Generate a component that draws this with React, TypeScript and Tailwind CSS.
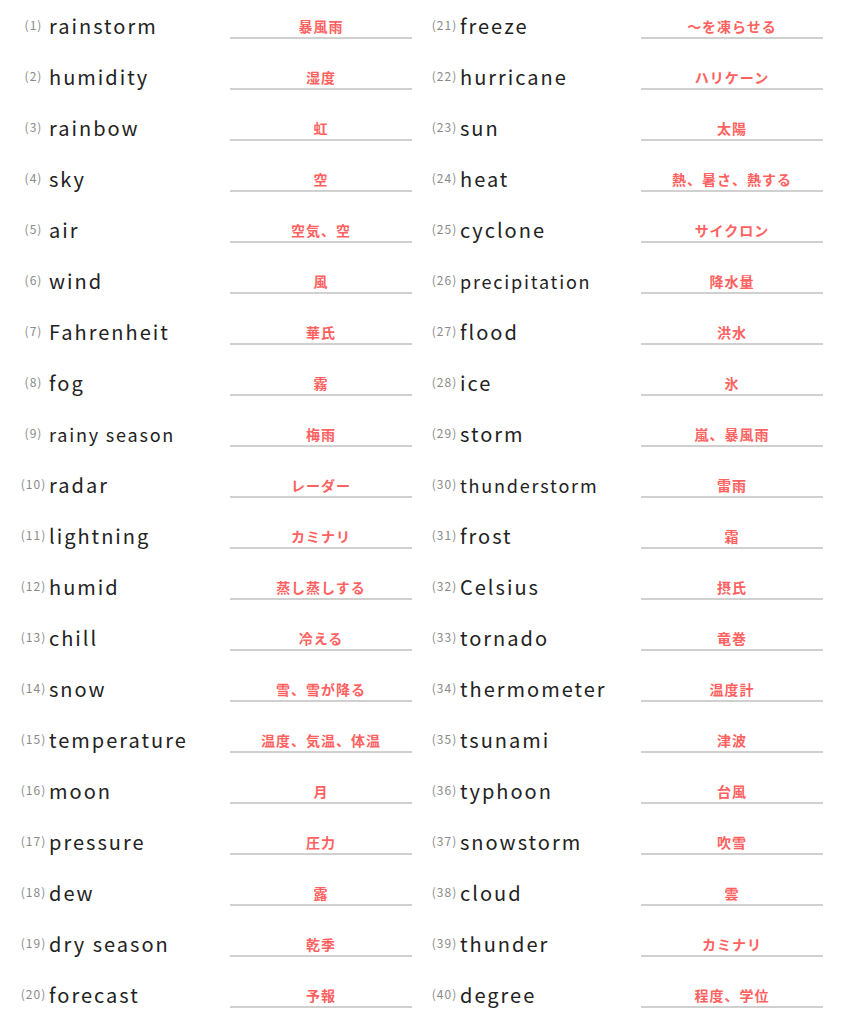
const rows: [string, string][] = [
  ['rainstorm', '暴風雨'],
  ['humidity', '湿度'],
  ['rainbow', '虹'],
  ['sky', '空'],
  ['air', '空気、空'],
  ['wind', '風'],
  ['Fahrenheit', '華氏'],
  ['fog', '霧'],
  ['rainy season', '梅雨'],
  ['radar', 'レーダー'],
  ['lightning', 'カミナリ'],
  ['humid', '蒸し蒸しする'],
  ['chill', '冷える'],
  ['snow', '雪、雪が降る'],
  ['temperature', '温度、気温、体温'],
  ['moon', '月'],
  ['pressure', '圧力'],
  ['dew', '露'],
  ['dry season', '乾季'],
  ['forecast', '予報'],
  ['freeze', '～を凍らせる'],
  ['hurricane', 'ハリケーン'],
  ['sun', '太陽'],
  ['heat', '熱、暑さ、熱する'],
  ['cyclone', 'サイクロン'],
  ['precipitation', '降水量'],
  ['flood', '洪水'],
  ['ice', '氷'],
  ['storm', '嵐、暴風雨'],
  ['thunderstorm', '雷雨'],
  ['frost', '霜'],
  ['Celsius', '摂氏'],
  ['tornado', '竜巻'],
  ['thermometer', '温度計'],
  ['tsunami', '津波'],
  ['typhoon', '台風'],
  ['snowstorm', '吹雪'],
  ['cloud', '雲'],
  ['thunder', 'カミナリ'],
  ['degree', '程度、学位'],
]

function Row({ n, word, answer }: { n: number; word: string; answer: string }) {
  const long = word.length >= 12
  return (
    <div className="flex h-[51px] items-start">
      <span className="mt-[19px] w-[28px] pl-[1px] text-center text-[12px] leading-[12px] tracking-[1px] text-[#8a8a8a]">
        ({n})
      </span>
      <span
        className={`ml-[2px] mt-[16px] flex-1 leading-[20px] tracking-[0.1em] text-[#222] ${
          long ? 'text-[18px]' : 'text-[20px]'
        }`}
      >
        {word}
      </span>
      <div className="mt-[19px] w-[182px] border-b-2 border-[#d0d0d0] pb-[4px] text-center text-[14px] font-semibold leading-[14px] tracking-[1px] text-[#ff6161]">
        {answer}
      </div>
    </div>
  )
}

export default function App() {
  const left = rows.slice(0, 20)
  const right = rows.slice(20)
  return (
    <div
      className="grid w-[842px] grid-cols-2 gap-x-[18px] bg-white px-[19px]"
      style={{ fontFamily: '"Noto Sans CJK JP", "Noto Sans", sans-serif' }}
    >
      <div className="flex flex-col">
        {left.map(([w, a], i) => (
          <Row key={w} n={i + 1} word={w} answer={a} />
        ))}
      </div>
      <div className="flex flex-col">
        {right.map(([w, a], i) => (
          <Row key={w} n={i + 21} word={w} answer={a} />
        ))}
      </div>
    </div>
  )
}
